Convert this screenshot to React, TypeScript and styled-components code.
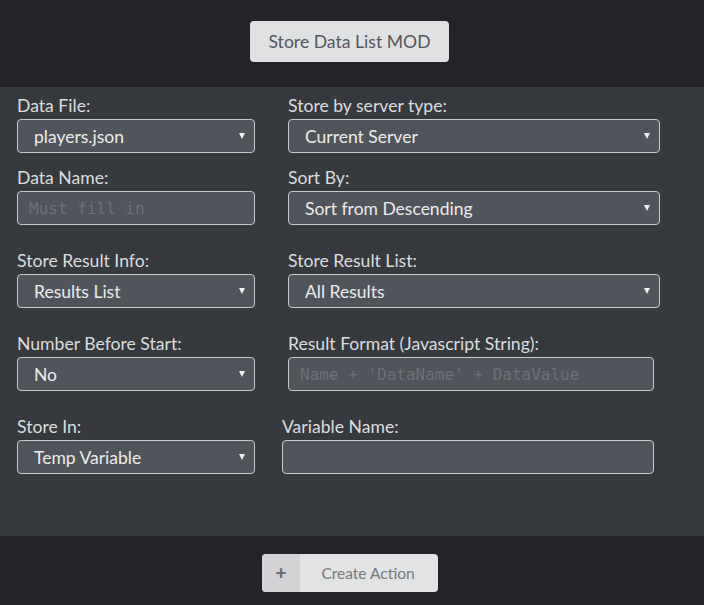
import React from "react";
import styled, { createGlobalStyle } from "styled-components";

const Global = createGlobalStyle`
  html, body { margin: 0; padding: 0; background: #232428; }
  body { font-family: Lato, "Open Sans", sans-serif; }
  * { box-sizing: border-box; }
`;

const Page = styled.div`
  width: 704px;
  height: 605px;
  display: flex;
  flex-direction: column;
  background: #232428;
`;

const Header = styled.header`
  height: 87px;
  display: flex;
  justify-content: center;
  padding-top: 21px;
  padding-right: 5px;
  background: #232428;
`;

const TitleButton = styled.button`
  width: 199px;
  height: 41px;
  border: none;
  border-radius: 4px;
  background: #e0e1e3;
  color: #55575a;
  font-family: Lato, sans-serif;
  font-size: 17.6px;
  padding: 0;
  cursor: pointer;
`;

const Panel = styled.main`
  flex: 1;
  background: #36393e;
  padding: 9px 0 0 17px;
  display: flex;
  flex-direction: column;
`;

const Row = styled.div<{ $top: number }>`
  display: grid;
  grid-template-columns: 238px 372px;
  column-gap: 33px;
  margin-top: ${(p) => p.$top}px;
`;

const Field = styled.div<{ $shift?: number; $width?: number }>`
  display: flex;
  flex-direction: column;
  margin-left: ${(p) => p.$shift ?? 0}px;
  width: ${(p) => (p.$width ? `${p.$width}px` : "auto")};
`;

const Label = styled.label`
  display: block;
  font-size: 17.6px;
  line-height: 20px;
  color: #dcdddf;
  margin-bottom: 3px;
  white-space: nowrap;
`;

const SelectWrap = styled.div`
  position: relative;
  &::after {
    content: "";
    position: absolute;
    right: 10px;
    top: 14px;
    border-left: 3px solid transparent;
    border-right: 3px solid transparent;
    border-top: 6px solid #f0f0f0;
    pointer-events: none;
  }
`;

const Select = styled.select`
  appearance: none;
  -webkit-appearance: none;
  width: 100%;
  height: 34px;
  border: 1px solid #c9cacc;
  border-radius: 4px;
  background: #50545b;
  color: #ececec;
  font-family: Lato, sans-serif;
  font-size: 17.5px;
  padding: 0 24px 0 16px;
  outline: none;
`;

const TextInput = styled.input`
  width: 100%;
  height: 34px;
  border: 1px solid #c9cacc;
  border-radius: 4px;
  background: #50545b;
  color: #eaeaea;
  font-family: "DejaVu Sans Mono", "Liberation Mono", monospace;
  font-size: 16px;
  padding: 0 11px;
  outline: none;
  &::placeholder {
    color: #6d7076;
  }
`;

const Footer = styled.footer`
  height: 69px;
  display: flex;
  justify-content: center;
  padding-top: 18px;
  padding-right: 4px;
  background: #232428;
`;

const ActionButton = styled.button`
  width: 176px;
  height: 38px;
  border: none;
  border-radius: 4px;
  overflow: hidden;
  padding: 0;
  display: flex;
  background: #e2e3e5;
  font-family: Lato, sans-serif;
  cursor: pointer;
`;

const PlusBox = styled.span`
  width: 38px;
  height: 100%;
  display: flex;
  align-items: center;
  justify-content: center;
  background: #d3d4d6;
  color: #6a6b6e;
  font-size: 19px;
  font-weight: 900;
  padding-bottom: 2px;
`;

const ActionText = styled.span`
  flex: 1;
  display: flex;
  align-items: center;
  justify-content: center;
  color: #76787b;
  font-size: 15.5px;
  padding-right: 2px;
`;

type Opt = { kind: "select"; value: string } | { kind: "input"; placeholder?: string };

function Control({ item }: { item: Opt }) {
  if (item.kind === "select") {
    return (
      <SelectWrap>
        <Select defaultValue={item.value}>
          <option>{item.value}</option>
        </Select>
      </SelectWrap>
    );
  }
  return <TextInput placeholder={item.placeholder ?? ""} />;
}

export default function App() {
  return (
    <Page>
      <Global />
      <Header>
        <TitleButton>Store Data List MOD</TitleButton>
      </Header>
      <Panel>
        <Row $top={0}>
          <Field>
            <Label>Data File:</Label>
            <Control item={{ kind: "select", value: "players.json" }} />
          </Field>
          <Field>
            <Label>Store by server type:</Label>
            <Control item={{ kind: "select", value: "Current Server" }} />
          </Field>
        </Row>
        <Row $top={15}>
          <Field>
            <Label>Data Name:</Label>
            <Control item={{ kind: "input", placeholder: "Must fill in" }} />
          </Field>
          <Field>
            <Label>Sort By:</Label>
            <Control item={{ kind: "select", value: "Sort from Descending" }} />
          </Field>
        </Row>
        <Row $top={26}>
          <Field>
            <Label>Store Result Info:</Label>
            <Control item={{ kind: "select", value: "Results List" }} />
          </Field>
          <Field>
            <Label>Store Result List:</Label>
            <Control item={{ kind: "select", value: "All Results" }} />
          </Field>
        </Row>
        <Row $top={26}>
          <Field>
            <Label>Number Before Start:</Label>
            <Control item={{ kind: "select", value: "No" }} />
          </Field>
          <Field $width={366}>
            <Label>Result Format (Javascript String):</Label>
            <Control item={{ kind: "input", placeholder: "Name + 'DataName' + DataValue" }} />
          </Field>
        </Row>
        <Row $top={26}>
          <Field>
            <Label>Store In:</Label>
            <Control item={{ kind: "select", value: "Temp Variable" }} />
          </Field>
          <Field $shift={-6} $width={372}>
            <Label>Variable Name:</Label>
            <Control item={{ kind: "input" }} />
          </Field>
        </Row>
      </Panel>
      <Footer>
        <ActionButton>
          <PlusBox>+</PlusBox>
          <ActionText>Create Action</ActionText>
        </ActionButton>
      </Footer>
    </Page>
  );
}
